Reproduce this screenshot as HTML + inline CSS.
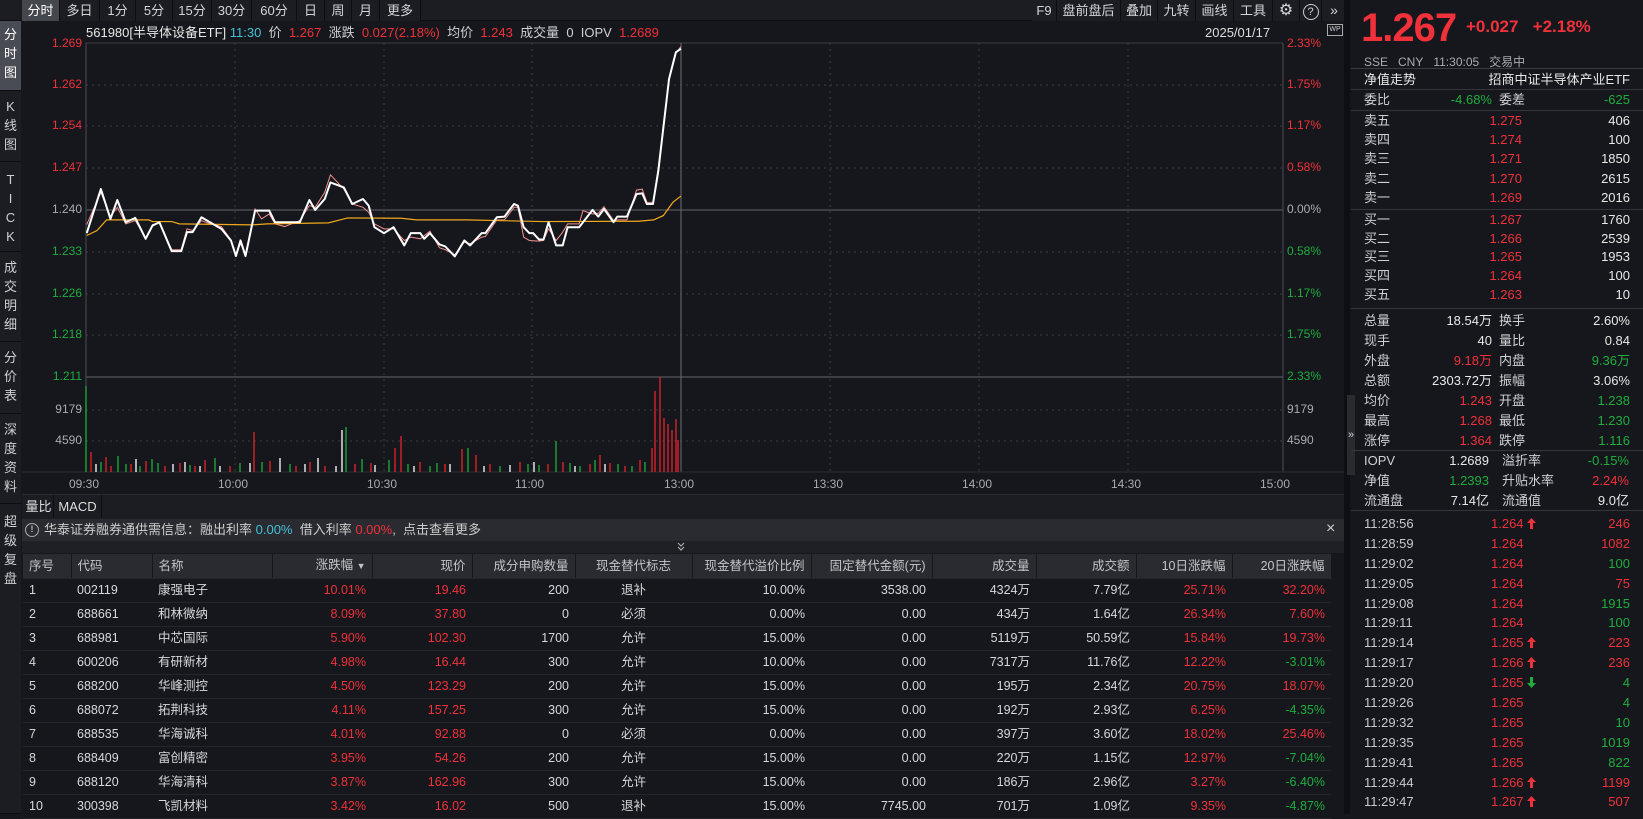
<!DOCTYPE html>
<html><head><meta charset="utf-8"><style>
*{margin:0;padding:0;box-sizing:border-box}
body{width:1643px;height:814px;background:#15171c;color:#cfd0d3;font-family:"Liberation Sans","Noto Sans CJK SC",sans-serif;font-size:13px;line-height:16px;position:relative;overflow:hidden}
.a{position:absolute;white-space:nowrap}
.r{color:#f0313a}.g{color:#1fad3e}.c{color:#45bfd6}.w{color:#e8e8e8}.gy{color:#a9abb0}
.btn{position:absolute;top:0;height:21px;line-height:21px;text-align:center;background:#1b1d22;border-right:1px solid #0c0d10;color:#d5d5d8;font-size:13px}
.side{position:absolute;left:0;width:21px;background:#1b1d22;color:#d0d0d3;font-size:13px;text-align:center;line-height:19px;border-bottom:1px solid #0c0d10;padding-top:4px}
.lb{position:absolute;width:60px;text-align:right;font-size:12px}
.rb{position:absolute;left:1287px;font-size:12px}
.tl{position:absolute;font-size:12px;color:#a9abb0}
table{position:absolute;left:23px;top:554px;border-collapse:collapse;table-layout:fixed;font-size:12.5px;line-height:16px}
td,th{height:24px;padding:0 6px;white-space:nowrap;overflow:hidden;border-bottom:1px solid #24262b;vertical-align:middle}
th{background:#2a2b30;font-weight:normal;color:#c4c5c8;border-right:1px solid #16171b}
td{color:#d8d8da}
.rt{text-align:right}.ct{text-align:center}.lt{text-align:left}
.rp{position:absolute;font-size:13px;line-height:16px;white-space:nowrap}
.hl{position:absolute;left:1351px;width:292px;height:1px;background:#33353b}
.tk div{height:19.9px;line-height:19.9px;white-space:nowrap}
.up,.dn{display:inline-block;width:9px;height:11px;vertical-align:-1px;margin-left:3px}
</style></head><body>

<div class="a" style="left:0;top:0;width:1347px;height:21px;background:#1b1d22;border-bottom:1px solid #0c0d10"></div>
<div class="btn" style="left:22px;width:38px;background:#45474f;color:#fff">分时</div>
<div class="btn" style="left:60px;width:40px">多日</div>
<div class="btn" style="left:100px;width:36px">1分</div>
<div class="btn" style="left:136px;width:37px">5分</div>
<div class="btn" style="left:173px;width:39px">15分</div>
<div class="btn" style="left:212px;width:40px">30分</div>
<div class="btn" style="left:252px;width:45px">60分</div>
<div class="btn" style="left:297px;width:28px">日</div>
<div class="btn" style="left:325px;width:27px">周</div>
<div class="btn" style="left:352px;width:28px">月</div>
<div class="btn" style="left:380px;width:41px">更多</div>
<div class="btn" style="left:1032px;width:25px">F9</div>
<div class="btn" style="left:1057px;width:64px">盘前盘后</div>
<div class="btn" style="left:1121px;width:37px">叠加</div>
<div class="btn" style="left:1158px;width:38px">九转</div>
<div class="btn" style="left:1196px;width:38px">画线</div>
<div class="btn" style="left:1234px;width:39px">工具</div>
<div class="btn" style="left:1273px;width:27px;font-size:16px">⚙</div>
<div class="btn" style="left:1300px;width:22px"><span style="display:inline-block;width:16px;height:16px;border:1px solid #ccc;border-radius:50%;line-height:14px;font-size:11px;margin-top:2px">?</span></div>
<div class="btn" style="left:1322px;width:25px;font-size:14px">»</div>

<div class="side" style="top:21px;height:70px;background:#4a4c55;color:#fff">分<br>时<br>图</div>
<div class="side" style="top:91px;height:71px;padding-top:6px">K<br>线<br>图</div>
<div class="side" style="top:162px;height:90px;padding-top:8px">T<br>I<br>C<br>K</div>
<div class="side" style="top:252px;height:90px;padding-top:6px">成<br>交<br>明<br>细</div>
<div class="side" style="top:342px;height:72px;padding-top:6px">分<br>价<br>表</div>
<div class="side" style="top:414px;height:90px;padding-top:6px">深<br>度<br>资<br>料</div>
<div class="side" style="top:504px;height:310px;padding-top:8px">超<br>级<br>复<br>盘</div>

<div class="a" style="left:86px;top:25px;font-size:13px"><span class="w">561980[半导体设备ETF]</span> <span class="c">11:30</span>&nbsp; 价&nbsp; <span class="r">1.267</span>&nbsp; 涨跌&nbsp; <span class="r">0.027(2.18%)</span>&nbsp; 均价&nbsp; <span class="r">1.243</span>&nbsp; 成交量&nbsp; 0&nbsp; IOPV&nbsp; <span class="r">1.2689</span></div>
<div class="a" style="left:1205px;top:25px;font-size:13px;color:#ddd">2025/01/17</div>
<div class="a" style="left:1327px;top:24px;width:16px;height:12px;border:1px solid #aaa;font-size:7px;line-height:10px;text-align:center;color:#ccc">WP</div>

<svg class="a" style="left:0;top:0" width="1643" height="814">
<g stroke="#3a3c42" stroke-dasharray="2,4" stroke-width="1">
<line x1="86" y1="85" x2="1283" y2="85"/><line x1="86" y1="126" x2="1283" y2="126"/><line x1="86" y1="168" x2="1283" y2="168"/>
<line x1="86" y1="252" x2="1283" y2="252"/><line x1="86" y1="294" x2="1283" y2="294"/><line x1="86" y1="335" x2="1283" y2="335"/>
<line x1="86" y1="410" x2="1283" y2="410"/><line x1="86" y1="441" x2="1283" y2="441"/>
<line x1="235" y1="43" x2="235" y2="472"/><line x1="384" y1="43" x2="384" y2="472"/><line x1="532" y1="43" x2="532" y2="472"/>
<line x1="830" y1="43" x2="830" y2="472"/><line x1="979" y1="43" x2="979" y2="472"/><line x1="1128" y1="43" x2="1128" y2="472"/>
</g>
<line x1="86" y1="43" x2="1283" y2="43" stroke="#3a3c42"/>
<line x1="86" y1="210" x2="1283" y2="210" stroke="#4a4c52" stroke-width="1.5"/>
<line x1="86" y1="377" x2="1283" y2="377" stroke="#4a4c52" stroke-width="1.5"/>
<line x1="86" y1="43" x2="86" y2="472" stroke="#4a4c52"/>
<line x1="1283" y1="43" x2="1283" y2="472" stroke="#4a4c52"/>
<line x1="681" y1="43" x2="681" y2="472" stroke="#6a6c72"/>
<line x1="22" y1="472" x2="1347" y2="472" stroke="#2a2c31"/>
<path stroke="#e8232b" stroke-width="1.3" fill="none" d="M91 472V452M106 472V457M111 472V466M131 472V464M146 472V461M165 472V466M180 472V463M195 472V466M205 472V460M230 472V466M254 472V432M270 472V461M296 472V466M310 472V462M325 472V466M355 472V464M371 472V463M395 472V448M401 472V436M420 472V462M445 472V464M462 472V449M476 472V455M490 472V464M520 472V462M548 472V464M563 472V462M590 472V464M600 472V455M610 472V463M625 472V466M640 472V460M652 472V448M655 472V391M660 472V377M664 472V418M668 472V424M672 472V430M676 472V419M678 472V440"/>
<path stroke="#1eae3c" stroke-width="1.3" fill="none" d="M86 472V386M101 472V462M118 472V456M126 472V464M140 472V466M152 472V459M158 472V463M190 472V465M215 472V458M240 472V463M262 472V462M290 472V464M346 472V427M362 472V459M389 472V460M408 472V464M430 472V466M437 472V463M468 472V448M500 472V466M528 472V464M539 472V465M556 472V441M570 472V463M580 472V466M595 472V460M618 472V464M632 472V466M645 472V462"/>
<path stroke="#ffffff" stroke-width="1.3" fill="none" d="M96 472V464M136 472V459M173 472V464M185 472V462M200 472V466M220 472V466M250 472V463M280 472V458M305 472V464M318 472V458M342 472V430M336 472V466M375 472V465M414 472V466M450 472V464M484 472V466M510 472V465M534 472V462M575 472V466M605 472V464"/>
<g transform="translate(60.7,160.9) scale(0.3826,0.3315)" fill="none">
<polyline vector-effect="non-scaling-stroke" stroke="#f29090" stroke-width="1" points="68,192 105,95 130,168 148,140 170,190 195,180 222,232 240,192 258,188 290,268 315,268 330,205 345,210 368,180 390,190 420,198 445,238 458,282 470,250 483,280 508,145 525,175 545,160 560,190 585,198 625,180 650,135 665,140 690,95 705,42 740,85 762,130 790,140 805,155 820,190 845,205 870,205 898,240 915,230 940,235 965,212 990,262 1005,268 1030,283 1055,245 1070,250 1100,230 1110,228 1140,178 1160,178 1185,140 1195,140 1210,230 1225,240 1250,242 1262,240 1275,205 1295,240 1312,215 1325,190 1355,190 1365,150 1390,160 1405,158 1420,138 1445,180 1455,178 1480,178 1505,88 1520,85 1532,125 1548,125 1562,20 1590,-250 1608,-325 1621,-345"/>
<polyline vector-effect="non-scaling-stroke" stroke="#f2a81c" stroke-width="1.2" points="68,225 95,210 120,178 230,178 240,183 290,183 310,190 500,193 540,190 700,187 750,172 890,173 930,178 1060,178 1260,183 1510,182 1550,178 1575,165 1600,125 1621,106"/>
<polyline vector-effect="non-scaling-stroke" stroke="#ffffff" stroke-width="2" stroke-linejoin="round" points="68,218 105,85 130,175 148,118 170,185 195,172 222,235 240,195 258,185 290,272 315,272 330,215 345,215 368,170 390,185 420,205 445,240 458,287 470,240 483,287 508,150 545,150 560,185 625,185 650,118 665,148 690,115 705,65 740,80 762,130 790,115 805,135 820,200 845,218 870,200 898,255 915,218 940,218 950,235 965,218 990,252 1005,258 1030,288 1055,240 1070,255 1100,218 1110,218 1140,170 1160,168 1185,130 1195,135 1210,200 1225,218 1235,218 1250,237 1262,237 1275,185 1295,255 1312,255 1325,200 1355,200 1390,148 1405,168 1420,145 1445,185 1455,168 1480,168 1505,100 1520,98 1532,130 1548,130 1562,30 1590,-247 1608,-328 1621,-338"/>
</g>
</svg>

<div class="lb r" style="left:22px;top:35px">1.269</div>
<div class="lb r" style="left:22px;top:76px">1.262</div>
<div class="lb r" style="left:22px;top:117px">1.254</div>
<div class="lb r" style="left:22px;top:159px">1.247</div>
<div class="lb gy" style="left:22px;top:201px">1.240</div>
<div class="lb g" style="left:22px;top:243px">1.233</div>
<div class="lb g" style="left:22px;top:285px">1.226</div>
<div class="lb g" style="left:22px;top:326px">1.218</div>
<div class="lb g" style="left:22px;top:368px">1.211</div>
<div class="lb gy" style="left:22px;top:401px">9179</div>
<div class="lb gy" style="left:22px;top:432px">4590</div>
<div class="rb r" style="top:35px">2.33%</div>
<div class="rb r" style="top:76px">1.75%</div>
<div class="rb r" style="top:117px">1.17%</div>
<div class="rb r" style="top:159px">0.58%</div>
<div class="rb gy" style="top:201px">0.00%</div>
<div class="rb g" style="top:243px">0.58%</div>
<div class="rb g" style="top:285px">1.17%</div>
<div class="rb g" style="top:326px">1.75%</div>
<div class="rb g" style="top:368px">2.33%</div>
<div class="rb gy" style="top:401px">9179</div>
<div class="rb gy" style="top:432px">4590</div>
<div class="tl" style="left:69px;top:476px">09:30</div>
<div class="tl" style="left:218px;top:476px">10:00</div>
<div class="tl" style="left:367px;top:476px">10:30</div>
<div class="tl" style="left:515px;top:476px">11:00</div>
<div class="tl" style="left:664px;top:476px">13:00</div>
<div class="tl" style="left:813px;top:476px">13:30</div>
<div class="tl" style="left:962px;top:476px">14:00</div>
<div class="tl" style="left:1111px;top:476px">14:30</div>
<div class="tl" style="left:1260px;top:476px">15:00</div>

<div class="a" style="left:22px;top:494px;width:1325px;height:25px;background:#1b1d22;border-top:1px solid #2a2c31"></div>
<div class="a" style="left:24px;top:495px;width:30px;height:23px;line-height:23px;text-align:center;border-right:1px solid #0c0d10;color:#ddd">量比</div>
<div class="a" style="left:54px;top:495px;width:48px;height:23px;line-height:23px;text-align:center;border-right:1px solid #0c0d10;color:#ddd">MACD</div>
<div class="a" style="left:22px;top:519px;width:1325px;height:22px;background:#2a2b30"></div>
<div class="a" style="left:25px;top:523px;width:14px;height:14px;border:1.5px solid #aaa;border-radius:50%;font-size:9px;line-height:11px;text-align:center;color:#bbb;font-weight:bold">!</div>
<div class="a" style="left:44px;top:522px;font-size:13px;color:#ccc">华泰证券融券通供需信息：融出利率 <span class="c">0.00%</span>&nbsp; 借入利率 <span class="r">0.00%</span>,&nbsp; 点击查看更多</div>
<div class="a" style="left:1326px;top:521px;font-size:16px;color:#ccc">×</div>
<div class="a" style="left:22px;top:541px;width:1325px;height:12px;background:#1f2025"></div>
<svg class="a" style="left:676px;top:542px" width="10" height="10"><path d="M2 1l3 3 3-3M2 5l3 3 3-3" stroke="#aaa" fill="none" stroke-width="1.2"/></svg>

<table>
<colgroup><col style="width:48px"><col style="width:81px"><col style="width:120px"><col style="width:100px"><col style="width:100px"><col style="width:103px"><col style="width:117px"><col style="width:119px"><col style="width:121px"><col style="width:104px"><col style="width:100px"><col style="width:96px"><col style="width:99px"></colgroup>
<tr><th class="lt">序号</th><th class="lt">代码</th><th class="lt">名称</th><th class="rt">涨跌幅 <span style="font-size:9px">▼</span></th><th class="rt">现价</th><th class="rt">成分申购数量</th><th class="ct">现金替代标志</th><th class="rt">现金替代溢价比例</th><th class="rt">固定替代金额(元)</th><th class="rt">成交量</th><th class="rt">成交额</th><th class="rt">10日涨跌幅</th><th class="rt">20日涨跌幅</th></tr>
<tr><td>1</td><td>002119</td><td>康强电子</td><td class="rt r">10.01%</td><td class="rt r">19.46</td><td class="rt">200</td><td class="ct">退补</td><td class="rt">10.00%</td><td class="rt">3538.00</td><td class="rt">4324万</td><td class="rt">7.79亿</td><td class="rt r">25.71%</td><td class="rt r">32.20%</td></tr>
<tr><td>2</td><td>688661</td><td>和林微纳</td><td class="rt r">8.09%</td><td class="rt r">37.80</td><td class="rt">0</td><td class="ct">必须</td><td class="rt">0.00%</td><td class="rt">0.00</td><td class="rt">434万</td><td class="rt">1.64亿</td><td class="rt r">26.34%</td><td class="rt r">7.60%</td></tr>
<tr><td>3</td><td>688981</td><td>中芯国际</td><td class="rt r">5.90%</td><td class="rt r">102.30</td><td class="rt">1700</td><td class="ct">允许</td><td class="rt">15.00%</td><td class="rt">0.00</td><td class="rt">5119万</td><td class="rt">50.59亿</td><td class="rt r">15.84%</td><td class="rt r">19.73%</td></tr>
<tr><td>4</td><td>600206</td><td>有研新材</td><td class="rt r">4.98%</td><td class="rt r">16.44</td><td class="rt">300</td><td class="ct">允许</td><td class="rt">10.00%</td><td class="rt">0.00</td><td class="rt">7317万</td><td class="rt">11.76亿</td><td class="rt r">12.22%</td><td class="rt g">-3.01%</td></tr>
<tr><td>5</td><td>688200</td><td>华峰测控</td><td class="rt r">4.50%</td><td class="rt r">123.29</td><td class="rt">200</td><td class="ct">允许</td><td class="rt">15.00%</td><td class="rt">0.00</td><td class="rt">195万</td><td class="rt">2.34亿</td><td class="rt r">20.75%</td><td class="rt r">18.07%</td></tr>
<tr><td>6</td><td>688072</td><td>拓荆科技</td><td class="rt r">4.11%</td><td class="rt r">157.25</td><td class="rt">300</td><td class="ct">允许</td><td class="rt">15.00%</td><td class="rt">0.00</td><td class="rt">192万</td><td class="rt">2.93亿</td><td class="rt r">6.25%</td><td class="rt g">-4.35%</td></tr>
<tr><td>7</td><td>688535</td><td>华海诚科</td><td class="rt r">4.01%</td><td class="rt r">92.88</td><td class="rt">0</td><td class="ct">必须</td><td class="rt">0.00%</td><td class="rt">0.00</td><td class="rt">397万</td><td class="rt">3.60亿</td><td class="rt r">18.02%</td><td class="rt r">25.46%</td></tr>
<tr><td>8</td><td>688409</td><td>富创精密</td><td class="rt r">3.95%</td><td class="rt r">54.26</td><td class="rt">200</td><td class="ct">允许</td><td class="rt">15.00%</td><td class="rt">0.00</td><td class="rt">220万</td><td class="rt">1.15亿</td><td class="rt r">12.97%</td><td class="rt g">-7.04%</td></tr>
<tr><td>9</td><td>688120</td><td>华海清科</td><td class="rt r">3.87%</td><td class="rt r">162.96</td><td class="rt">300</td><td class="ct">允许</td><td class="rt">15.00%</td><td class="rt">0.00</td><td class="rt">186万</td><td class="rt">2.96亿</td><td class="rt r">3.27%</td><td class="rt g">-6.40%</td></tr>
<tr><td>10</td><td>300398</td><td>飞凯材料</td><td class="rt r">3.42%</td><td class="rt r">16.02</td><td class="rt">500</td><td class="ct">退补</td><td class="rt">15.00%</td><td class="rt">7745.00</td><td class="rt">701万</td><td class="rt">1.09亿</td><td class="rt r">9.35%</td><td class="rt g">-4.87%</td></tr>
</table>

<div class="a" style="left:1344px;top:0;width:6px;height:814px;background:#0e0f12"></div>
<div class="a" style="left:1347px;top:395px;width:8px;height:80px;background:#2a2b30;color:#ccc;font-size:11px;line-height:80px;text-align:center">»</div>

<div class="a r" style="left:1361px;top:6px;font-size:40px;line-height:44px;font-weight:bold;letter-spacing:-1px">1.267</div>
<div class="a r" style="left:1466px;top:17px;font-size:17px;line-height:20px;font-weight:bold">+0.027&nbsp;&nbsp; +2.18%</div>
<div class="a gy" style="left:1364px;top:54px;font-size:12px">SSE&nbsp;&nbsp; CNY&nbsp;&nbsp; 11:30:05&nbsp;&nbsp; 交易中</div>
<div class="hl" style="top:68px;background:#3a3c42"></div>
<div class="rp w" style="left:1364px;top:72px">净值走势</div>
<div class="rp w" style="left:1420px;top:72px;width:210px;text-align:right">招商中证半导体产业ETF</div>
<div class="hl" style="top:89px"></div>
<div class="rp" style="left:1364px;top:92px">委比</div><div class="rp g" style="left:1400px;top:92px;width:92px;text-align:right">-4.68%</div><div class="rp" style="left:1499px;top:92px">委差</div><div class="rp g" style="left:1540px;top:92px;width:90px;text-align:right">-625</div>
<div class="hl" style="top:110px"></div>

<div class="rp" style="left:1364px;top:113px">卖五</div><div class="rp r" style="left:1440px;top:113px;width:82px;text-align:right">1.275</div><div class="rp w" style="left:1540px;top:113px;width:90px;text-align:right">406</div>
<div class="rp" style="left:1364px;top:132px">卖四</div><div class="rp r" style="left:1440px;top:132px;width:82px;text-align:right">1.274</div><div class="rp w" style="left:1540px;top:132px;width:90px;text-align:right">100</div>
<div class="rp" style="left:1364px;top:151px">卖三</div><div class="rp r" style="left:1440px;top:151px;width:82px;text-align:right">1.271</div><div class="rp w" style="left:1540px;top:151px;width:90px;text-align:right">1850</div>
<div class="rp" style="left:1364px;top:171px">卖二</div><div class="rp r" style="left:1440px;top:171px;width:82px;text-align:right">1.270</div><div class="rp w" style="left:1540px;top:171px;width:90px;text-align:right">2615</div>
<div class="rp" style="left:1364px;top:190px">卖一</div><div class="rp r" style="left:1440px;top:190px;width:82px;text-align:right">1.269</div><div class="rp w" style="left:1540px;top:190px;width:90px;text-align:right">2016</div>
<div class="hl" style="top:209px"></div>
<div class="rp" style="left:1364px;top:212px">买一</div><div class="rp r" style="left:1440px;top:212px;width:82px;text-align:right">1.267</div><div class="rp w" style="left:1540px;top:212px;width:90px;text-align:right">1760</div>
<div class="rp" style="left:1364px;top:231px">买二</div><div class="rp r" style="left:1440px;top:231px;width:82px;text-align:right">1.266</div><div class="rp w" style="left:1540px;top:231px;width:90px;text-align:right">2539</div>
<div class="rp" style="left:1364px;top:249px">买三</div><div class="rp r" style="left:1440px;top:249px;width:82px;text-align:right">1.265</div><div class="rp w" style="left:1540px;top:249px;width:90px;text-align:right">1953</div>
<div class="rp" style="left:1364px;top:268px">买四</div><div class="rp r" style="left:1440px;top:268px;width:82px;text-align:right">1.264</div><div class="rp w" style="left:1540px;top:268px;width:90px;text-align:right">100</div>
<div class="rp" style="left:1364px;top:287px">买五</div><div class="rp r" style="left:1440px;top:287px;width:82px;text-align:right">1.263</div><div class="rp w" style="left:1540px;top:287px;width:90px;text-align:right">10</div>
<div class="hl" style="top:308px"></div>

<div class="rp" style="left:1364px;top:313px">总量</div><div class="rp w" style="left:1400px;top:313px;width:92px;text-align:right">18.54万</div><div class="rp" style="left:1499px;top:313px">换手</div><div class="rp w" style="left:1540px;top:313px;width:90px;text-align:right">2.60%</div>
<div class="rp" style="left:1364px;top:333px">现手</div><div class="rp w" style="left:1400px;top:333px;width:92px;text-align:right">40</div><div class="rp" style="left:1499px;top:333px">量比</div><div class="rp w" style="left:1540px;top:333px;width:90px;text-align:right">0.84</div>
<div class="rp" style="left:1364px;top:353px">外盘</div><div class="rp r" style="left:1400px;top:353px;width:92px;text-align:right">9.18万</div><div class="rp" style="left:1499px;top:353px">内盘</div><div class="rp g" style="left:1540px;top:353px;width:90px;text-align:right">9.36万</div>
<div class="rp" style="left:1364px;top:373px">总额</div><div class="rp w" style="left:1400px;top:373px;width:92px;text-align:right">2303.72万</div><div class="rp" style="left:1499px;top:373px">振幅</div><div class="rp w" style="left:1540px;top:373px;width:90px;text-align:right">3.06%</div>
<div class="rp" style="left:1364px;top:393px">均价</div><div class="rp r" style="left:1400px;top:393px;width:92px;text-align:right">1.243</div><div class="rp" style="left:1499px;top:393px">开盘</div><div class="rp g" style="left:1540px;top:393px;width:90px;text-align:right">1.238</div>
<div class="rp" style="left:1364px;top:413px">最高</div><div class="rp r" style="left:1400px;top:413px;width:92px;text-align:right">1.268</div><div class="rp" style="left:1499px;top:413px">最低</div><div class="rp g" style="left:1540px;top:413px;width:90px;text-align:right">1.230</div>
<div class="rp" style="left:1364px;top:433px">涨停</div><div class="rp r" style="left:1400px;top:433px;width:92px;text-align:right">1.364</div><div class="rp" style="left:1499px;top:433px">跌停</div><div class="rp g" style="left:1540px;top:433px;width:90px;text-align:right">1.116</div>
<div class="hl" style="top:450px"></div>
<div class="rp" style="left:1364px;top:453px">IOPV</div><div class="rp w" style="left:1400px;top:453px;width:89px;text-align:right">1.2689</div><div class="rp" style="left:1502px;top:453px">溢折率</div><div class="rp g" style="left:1540px;top:453px;width:89px;text-align:right">-0.15%</div>
<div class="rp" style="left:1364px;top:473px">净值</div><div class="rp g" style="left:1400px;top:473px;width:89px;text-align:right">1.2393</div><div class="rp" style="left:1502px;top:473px">升贴水率</div><div class="rp r" style="left:1540px;top:473px;width:89px;text-align:right">2.24%</div>
<div class="rp" style="left:1364px;top:493px">流通盘</div><div class="rp w" style="left:1400px;top:493px;width:89px;text-align:right">7.14亿</div><div class="rp" style="left:1502px;top:493px">流通值</div><div class="rp w" style="left:1540px;top:493px;width:89px;text-align:right">9.0亿</div>
<div class="hl" style="top:510px"></div>

<div class="a tk" style="left:1364px;top:514px;color:#c8c9cc"><div>11:28:56</div><div>11:28:59</div><div>11:29:02</div><div>11:29:05</div><div>11:29:08</div><div>11:29:11</div><div>11:29:14</div><div>11:29:17</div><div>11:29:20</div><div>11:29:26</div><div>11:29:32</div><div>11:29:35</div><div>11:29:41</div><div>11:29:44</div><div>11:29:47</div></div>
<div class="a tk r" style="left:1491px;top:514px">
<div>1.264<svg class="up" viewBox="0 0 9 11"><path d="M4.5 0L9 5H6V11H3V5H0Z" fill="#f0313a"/></svg></div>
<div>1.264</div><div>1.264</div><div>1.264</div><div>1.264</div><div>1.264</div>
<div>1.265<svg class="up" viewBox="0 0 9 11"><path d="M4.5 0L9 5H6V11H3V5H0Z" fill="#f0313a"/></svg></div>
<div>1.266<svg class="up" viewBox="0 0 9 11"><path d="M4.5 0L9 5H6V11H3V5H0Z" fill="#f0313a"/></svg></div>
<div>1.265<svg class="dn" viewBox="0 0 9 11"><path d="M4.5 11L9 6H6V0H3V6H0Z" fill="#1fad3e"/></svg></div>
<div>1.265</div><div>1.265</div><div>1.265</div><div>1.265</div>
<div>1.266<svg class="up" viewBox="0 0 9 11"><path d="M4.5 0L9 5H6V11H3V5H0Z" fill="#f0313a"/></svg></div>
<div>1.267<svg class="up" viewBox="0 0 9 11"><path d="M4.5 0L9 5H6V11H3V5H0Z" fill="#f0313a"/></svg></div>
</div>
<div class="a tk" style="left:1560px;top:514px;width:70px;text-align:right"><div class="r">246</div><div class="r">1082</div><div class="g">100</div><div class="r">75</div><div class="g">1915</div><div class="g">100</div><div class="r">223</div><div class="r">236</div><div class="g">4</div><div class="g">4</div><div class="g">10</div><div class="g">1019</div><div class="g">822</div><div class="r">1199</div><div class="r">507</div></div>
</body></html>
